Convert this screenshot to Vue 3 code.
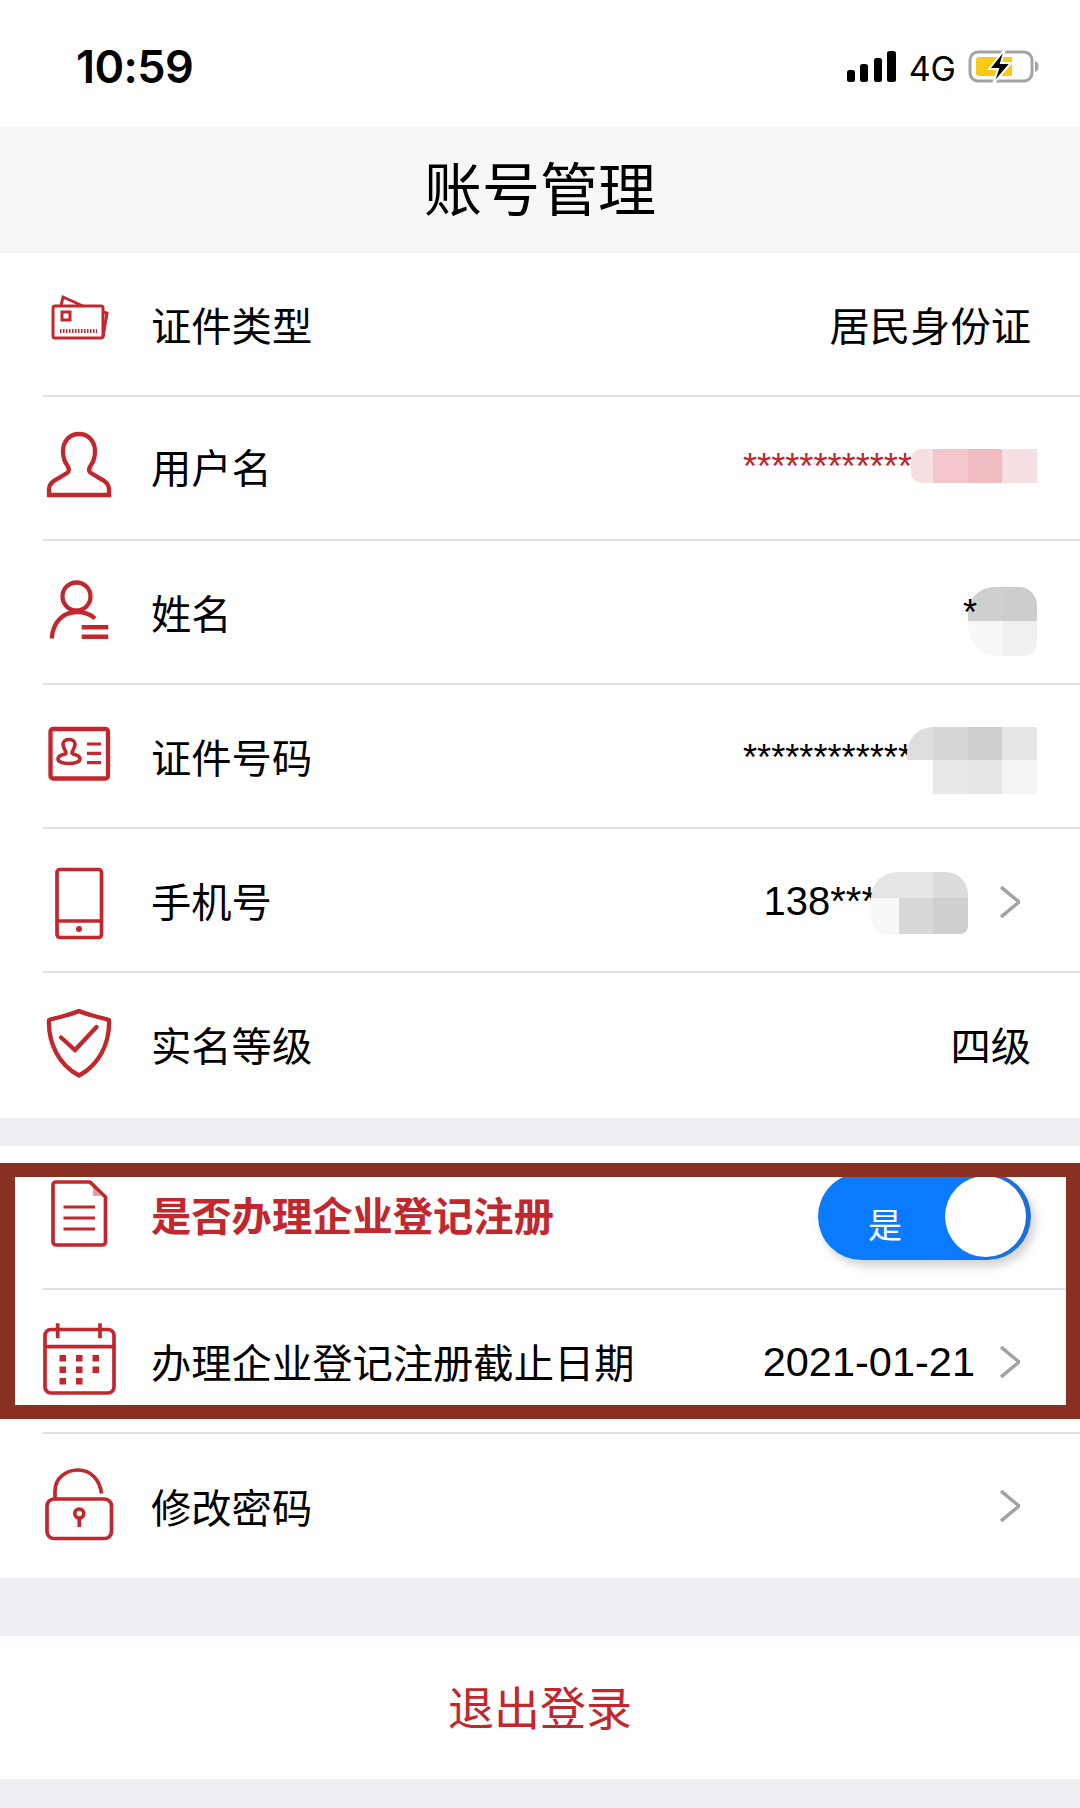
<template>
  <div class="page">
    <div class="status">
      <span class="time">10:59</span>
      <div class="status-right">
        <svg class="signal" width="49" height="31" viewBox="0 0 49 31">
          <rect x="0" y="19" width="8" height="12" rx="2.5" />
          <rect x="13" y="13" width="8" height="18" rx="2.5" />
          <rect x="27" y="7" width="8" height="24" rx="2.5" />
          <rect x="40" y="0" width="9" height="31" rx="2.5" />
        </svg>
        <span class="net">4G</span>
        <svg class="battery" width="71" height="33" viewBox="0 0 71 33">
          <rect x="2" y="2" width="62" height="29" rx="8" fill="none" stroke="#a3a3a3" stroke-width="3" />
          <path d="M8 10a3 3 0 0 1 3-3h33v19h-33a3 3 0 0 1-3-3z" fill="#f8c915" />
          <path d="M67 11c2.500 .5 3.500 3 3.500 5.500s-1 5-3.500 5.500z" fill="#a3a3a3" />
          <path d="M37 -1 L21 19 H30 L25 34 L43 13 H33 Z" fill="#000" stroke="#fff" stroke-width="2" />
        </svg>
      </div>
    </div>

    <div class="nav"><span>账号管理</span></div>

    <div class="group group-top">
      <div class="row" v-for="row in topRows" :key="row.label">
        <svg class="icon" viewBox="0 0 72 72" width="72" height="72">
          <use :href="'#' + row.icon" />
        </svg>
        <span class="label" :class="row.labelClass">{{ row.label }}</span>
        <span class="value" :class="row.valueClass">{{ row.value }}</span>
        <svg v-if="row.arrow" class="arrow" width="20" height="32" viewBox="0 0 20 32">
          <path d="M1 1 L19 16 L1 31" />
        </svg>
        <div v-if="row.mosaic" class="mosaic" :class="row.mosaic.cls">
          <i
            v-for="(c, i) in row.mosaic.cells"
            :key="i"
            :class="'c' + i"
            :style="{ background: c }"
          ></i>
        </div>
      </div>
    </div>

    <div class="gap"></div>

    <div class="group group-mid">
      <div class="row">
        <svg class="icon" viewBox="0 0 72 72" width="72" height="72"><use href="#i-doc" /></svg>
        <span class="label label-red">是否办理企业登记注册</span>
        <div class="toggle">
          <span class="toggle-text">是</span>
          <span class="knob"></span>
        </div>
      </div>
      <div class="row">
        <svg class="icon" viewBox="0 0 72 72" width="72" height="72"><use href="#i-cal" /></svg>
        <span class="label">办理企业登记注册截止日期</span>
        <span class="value date">2021-01-21</span>
        <svg class="arrow" width="20" height="32" viewBox="0 0 20 32">
          <path d="M1 1 L19 16 L1 31" />
        </svg>
      </div>
      <div class="row row-end">
        <svg class="icon" viewBox="0 0 72 72" width="72" height="72"><use href="#i-lock" /></svg>
        <span class="label">修改密码</span>
        <span class="value"></span>
        <svg class="arrow" width="20" height="32" viewBox="0 0 20 32">
          <path d="M1 1 L19 16 L1 31" />
        </svg>
      </div>
      <div class="frame"></div>
    </div>

    <div class="gap gap-big"></div>

    <div class="logout"><span>退出登录</span></div>

    <!-- icon defs -->
    <svg class="defs" width="0" height="0">
      <defs>
        <g id="i-card" fill="none" stroke="#c1272d" stroke-width="3">
          <rect x="10" y="18" width="50" height="32" rx="2" />
          <path d="M18 18 L20 9 L40 18" />
          <path d="M60 24 L64 25 L60 49" />
          <rect x="19" y="24" width="8" height="8" />
          <path d="M17 43 H54" stroke-width="4" stroke-dasharray="1.500 1.500" />
        </g>
        <g id="i-user" fill="none" stroke="#c1272d" stroke-width="4.300">
          <path d="M6 63 V57 C6 52 10 49 14 47 L24 41 C27 39 26 36 24 33 C21 29 20 25 20 19 C20 9 27 2 36 2 C45 2 52 9 52 19 C52 25 51 29 48 33 C46 36 45 39 48 41 L58 47 C62 49 66 52 66 57 V63 Z" />
        </g>
        <g id="i-name" fill="none" stroke="#c1272d" stroke-width="4.300">
          <circle cx="33.500" cy="20.500" r="14" />
          <path d="M8.700 62.500 C10 46 20 36 34 36 C41 36 47 38 52 42.500" />
          <path d="M38.700 51.300 H65.300 M38.700 60.700 H65.300" stroke-width="4.500" />
        </g>
        <g id="i-id" fill="none" stroke="#c1272d" stroke-width="4.300">
          <rect x="7.500" y="9" width="57.500" height="49.500" rx="2.500" />
          <path d="M20 24 C20 18 32 18 32 24 C32 29 29 30 29 33 C29 35 37 34 37 39 C37 45 15 45 15 39 C15 34 23 35 23 33 C23 30 20 29 20 24 Z" stroke-width="3.600" />
          <path d="M44 24 H58 M44 33.300 H58 M44 42.700 H58" stroke-width="3.200" />
        </g>
        <g id="i-phone" fill="none" stroke="#c1272d" stroke-width="3.700">
          <rect x="14" y="5.500" width="44.500" height="68" rx="3" />
          <path d="M14 57 H58.500" />
          <circle cx="36" cy="65" r="3" fill="#c1272d" stroke="none" />
        </g>
        <g id="i-shield" fill="none" stroke="#c1272d" stroke-width="4.300">
          <path d="M36 1 C45 5 56 7 66 10 C67 33 56 55 36 65.500 C16 55 5 33 6 10 C16 7 27 5 36 1 Z" stroke-linejoin="round" />
          <path d="M18 27.500 L32 40 L53.500 17" stroke-linecap="round" />
        </g>
        <g id="i-doc" fill="none" stroke="#c1272d" stroke-width="3.700" transform="translate(0 -1)">
          <path d="M13 2 H47 L62.500 17 V62 A3 3 0 0 1 59.500 65 H13 A3 3 0 0 1 10 62 V5 A3 3 0 0 1 13 2 Z" stroke-linejoin="round" />
          <path d="M50 7 L50 16 L58 16 Z" fill="#c1272d" fill-opacity=".45" stroke="none" />
          <path d="M20.500 27 H52 M20.500 38 H52 M20.500 49 H52" stroke-width="3.200" />
        </g>
        <g id="i-cal" stroke="#c1272d">
          <rect x="2" y="4.500" width="69" height="63.500" rx="6" fill="none" stroke-width="3.700" />
          <path d="M2 21.700 H71 M14.700 -1.700 V13.300 M57 -1.700 V13.300" fill="none" stroke-width="3.700" />
          <g fill="#c1272d" stroke="none">
            <rect x="16.500" y="30" width="6.500" height="6.500" />
            <rect x="33" y="30" width="6.500" height="6.500" />
            <rect x="49.500" y="30" width="6.500" height="6.500" />
            <rect x="16.500" y="41.500" width="6.500" height="6.500" />
            <rect x="33" y="41.500" width="6.500" height="6.500" />
            <rect x="49.500" y="41.500" width="6.500" height="6.500" />
            <rect x="16.500" y="53" width="6.500" height="6.500" />
            <rect x="33" y="53" width="6.500" height="6.500" />
          </g>
        </g>
        <g id="i-lock" fill="none" stroke="#c1272d" stroke-width="3.700">
          <rect x="4" y="29" width="64.500" height="39.500" rx="7" />
          <path d="M12 29 V21 C12 8 23 0 35 0 C48 0 57 10 58.500 23.500" />
          <circle cx="36.300" cy="43.500" r="4.500" />
          <path d="M36.300 48 V57" />
        </g>
      </defs>
    </svg>
  </div>
</template>

<script setup>
const topRows = [
  { icon: 'i-card', label: '证件类型', value: '居民身份证' },
  {
    icon: 'i-user',
    label: '用户名',
    labelClass: 'label-up',
    value: '************',
    valueClass: 'stars stars-red',
    mosaic: { cls: 'm-user', cells: ['#f7dfe1', '#f2c6ca', '#efbcc1', '#f6dfe2'] }
  },
  {
    icon: 'i-name',
    label: '姓名',
    value: '*',
    valueClass: 'stars stars-one',
    mosaic: { cls: 'm-name', cells: ['#cfcfcf', '#cdcdcd', '#f8f8f8', '#f0f0f0'] }
  },
  {
    icon: 'i-id',
    label: '证件号码',
    value: '************',
    valueClass: 'stars stars-id',
    mosaic: {
      cls: 'm-id',
      cells: ['#dedede', '#d6d6d6', '#cecece', '#e6e6e6', 'transparent', '#e8e8e8', '#e6e6e6', '#f5f5f5']
    }
  },
  {
    icon: 'i-phone',
    label: '手机号',
    value: '138***',
    valueClass: 'phone',
    arrow: true,
    mosaic: { cls: 'm-phone', cells: ['#e6e6e6', '#e6e6e6', '#dcdcdc', '#f8f8f8', '#d8d8d8', '#cfcfcf'] }
  },
  { icon: 'i-shield', label: '实名等级', labelClass: 'label-up', value: '四级', valueClass: 'label-up' }
]
</script>

<style>
body {
  margin: 0;
  background: #eeeff3;
}
</style>

<style scoped>
.page {
  width: 1080px;
  height: 1808px;
  overflow: hidden;
  background: #eeeff3;
  color: #000;
  font-family: "Liberation Sans", "Noto Sans CJK SC", sans-serif;
}

.status {
  height: 126px;
  background: #fff;
  display: flex;
  align-items: center;
  justify-content: space-between;
  padding: 0 41px 0 76px;
  box-sizing: border-box;
}
.time {
  font-family: Inter, sans-serif;
  font-size: 45px;
  font-weight: 600;
  line-height: 1;
  letter-spacing: -0.6px;
  margin-bottom: -6px;
}
.status-right {
  display: flex;
  align-items: center;
  margin-top: 6px;
}
.signal {
  fill: #000;
}
.net {
  font-family: Inter, sans-serif;
  font-size: 34px;
  margin: 4px 12px 0 13px;
}

.nav {
  height: 127px;
  background: #f7f7f7;
  display: flex;
  align-items: center;
  justify-content: center;
  font-family: "Noto Sans CJK SC", sans-serif;
  font-size: 58px;
}
.nav span {
  margin-top: -7px;
}

.group {
  background: #fff;
  position: relative;
}
.group-top .row:last-child {
  height: 145px;
  border-bottom: 0;
}

.row {
  position: relative;
  height: 144px;
  margin-left: 43px;
  padding-right: 49px;
  box-sizing: border-box;
  border-bottom: 2px solid #e0e0e0;
  display: flex;
  align-items: center;
}
.row-end {
  border-bottom: 0;
}
.icon {
  flex: none;
  overflow: visible;
  margin-right: 36px;
}
.label {
  flex: none;
  font-family: "Noto Sans CJK SC", sans-serif;
  font-size: 40.3px;
  margin-top: -2px;
  white-space: nowrap;
}
.label-red {
  color: #c1272d;
  font-weight: 700;
  margin-top: -8px;
}
.value {
  flex: 1;
  text-align: right;
  font-family: "Liberation Sans", "Noto Sans CJK SC", sans-serif;
  font-size: 40.3px;
  margin-top: -2px;
  white-space: nowrap;
}
.label.label-up,
.value.label-up {
  margin-top: -5px;
}
.stars {
  font-size: 36.2px;
  margin-right: 119px;
  margin-top: -2px;
}
.stars-red {
  color: #c1272d;
}
.stars-one {
  position: relative;
  z-index: 1;
  margin-right: 54px;
  margin-top: 2px;
}
.stars-id {
  margin-top: 4px;
}
.phone {
  margin-right: 93px;
  font-size: 40px;
  margin-top: 3px;
}
.phone + .arrow {
  margin-left: 30px;
  margin-top: 3px;
}
.date {
  font-size: 41.5px;
  margin-top: 1px;
}
.date + .arrow {
  margin-left: 25px;
  margin-top: 1px;
}
.arrow {
  flex: none;
  margin-right: 11px;
  fill: none;
  stroke: #a3a3a3;
  stroke-width: 3.5;
}

/* blurred out parts of the values */
.mosaic {
  position: absolute;
  display: grid;
  overflow: hidden;
}
.m-user {
  top: 52px;
  right: 43px;
  grid-template-columns: 22px 35px 34px 35px;
  grid-template-rows: 34px;
  border-radius: 10px 0 0 10px;
}
.m-name {
  top: 46px;
  right: 43px;
  grid-template-columns: 34px 35px;
  grid-template-rows: 34px 35px;
  border-radius: 26px 18px 14px 30px;
}
.m-id {
  top: 42px;
  right: 43px;
  grid-template-columns: 26px 35px 34px 35px;
  grid-template-rows: 33px 34px;
}
.m-id .c0 {
  border-radius: 30px 0 0 0;
}
.m-phone {
  top: 43px;
  right: 112px;
  grid-template-columns: 28px 34px 35px;
  grid-template-rows: 26px 36px;
  border-radius: 24px 22px 8px 16px;
}
.m-phone .c0 {
  border-radius: 26px 0 0 0;
}

.toggle {
  margin-left: auto;
  width: 213px;
  height: 87px;
  border-radius: 44px;
  background: linear-gradient(90deg, #0a7aff 60%, #1f6fd0 100%);
  box-shadow: 4px 6px 10px rgba(0, 0, 0, 0.18);
  position: relative;
  display: flex;
  align-items: center;
  box-sizing: border-box;
  padding-left: 50px;
  margin-top: -2px;
}
.toggle-text {
  color: #fff;
  font-family: "Noto Sans CJK SC", sans-serif;
  font-size: 34px;
  margin-top: 15px;
}
.knob {
  position: absolute;
  right: 5px;
  top: 3px;
  width: 81px;
  height: 81px;
  border-radius: 50%;
  background: #fff;
}

/* annotation box drawn on top of the screenshot */
.frame {
  position: absolute;
  top: 17px;
  left: 0;
  width: 1080px;
  height: 256px;
  box-sizing: border-box;
  border: 14px solid #8a3022;
  border-left-width: 15px;
  pointer-events: none;
}

.gap {
  height: 28px;
}
.gap-big {
  height: 58px;
}

.logout {
  height: 143px;
  background: #fff;
  display: flex;
  align-items: center;
  justify-content: center;
  font-family: "Noto Sans CJK SC", sans-serif;
  font-size: 46px;
  color: #c1272d;
}
.logout span {
  margin-top: -6px;
}

.defs {
  position: absolute;
}
</style>
